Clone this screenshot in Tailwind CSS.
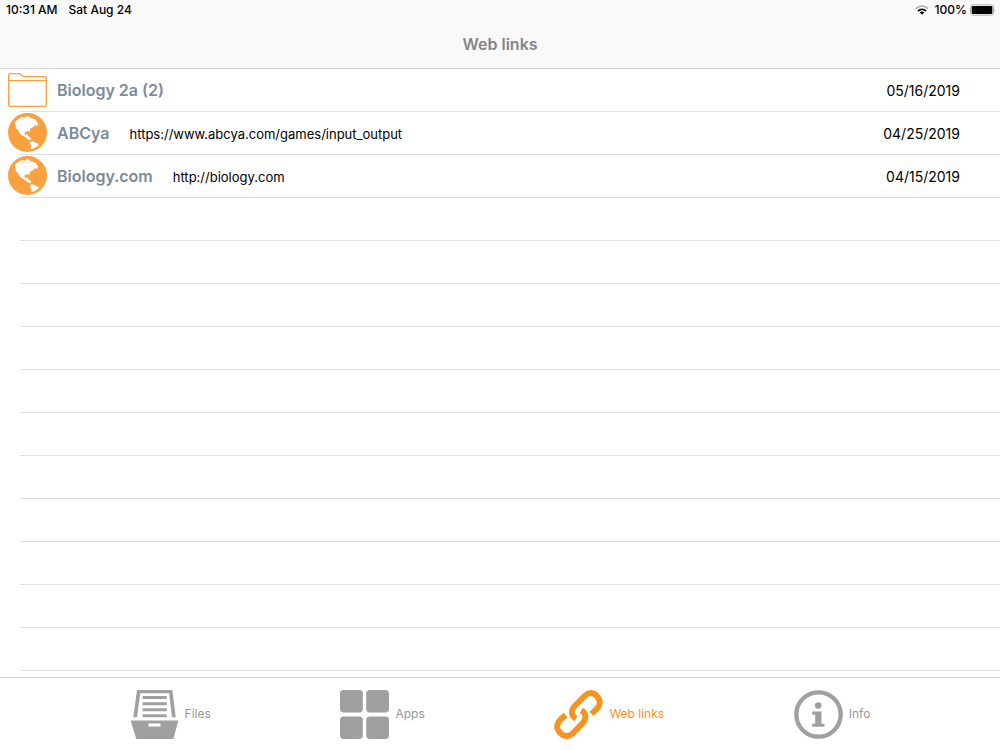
<!DOCTYPE html>
<html lang="en">
<head>
<meta charset="utf-8">
<meta name="viewport" content="width=device-width, initial-scale=1">
<title>Web links</title>
<script src="https://cdn.jsdelivr.net/npm/@tailwindcss/browser@4"></script>
</head>
<body class="flex h-screen flex-col overflow-hidden bg-white font-['Inter',sans-serif] text-black">
<svg class="hidden" aria-hidden="true">
  <symbol id="globe" viewBox="0 0 117 117">
    <circle cx="58.500" cy="58.500" r="58.500" fill="#f9a13e"/>
    <path fill="#fff" d="M20 28 L28 20 L36 15 L44 13 L50 14 L57 9 L66 12 L62 17 L70 14 L77 18 L82 20 L91 32 L86 40 L81 35 L77 41 L71 44 L66 48 L65 57 L61 54 L52 56 L49 62 L53 66 L58 63 L60 69 L66 73 L70 79 L66 82 L59 79 L51 71 L40 66 L34 59 L30 51 L23 45 L23 35 Z"/>
    <path fill="#fff" d="M67 86 L76 85 L83 89 L92 92 L91 98 L83 103 L75 108 L68 108 L70 99 L66 92 Z"/>
    <path fill="none" stroke="#f9a13e" stroke-width="2" d="M42 18 L47 21 M54 16 L52 20"/>
  </symbol>
</svg>

<header class="shrink-0 border-b border-[#d2d2d2] bg-[#f9f9f9]">
  <div class="flex h-5 items-center justify-between pl-1.5 pr-1 text-xs font-medium">
    <div class="flex gap-[11px]"><span>10:31 AM</span><span>Sat Aug 24</span></div>
    <div class="flex items-center">
      <svg class="mr-1.5 h-[10px] w-[14px]" viewBox="0 0 42 30" fill="none" aria-label="Wi-Fi" role="img">
        <path d="M3 11 Q21 -5 39 11" stroke="#aaa" stroke-width="5"/>
        <path d="M9 18 Q21 8 33 18" stroke="#000" stroke-width="5"/>
        <path d="M14 22 Q21 17 28 22 L21 29 Z" fill="#000"/>
      </svg>
      <span class="mr-[3px]">100%</span>
      <svg class="h-[12px] w-[26px]" viewBox="0 0 78 36" aria-label="Battery full" role="img">
        <rect x="1.500" y="2.500" width="69" height="31" rx="8" fill="#fff" stroke="#aaa" stroke-width="3"/>
        <rect x="5" y="6" width="62" height="24" rx="4"/>
        <path d="M74 13 Q78 18 74 23 Z" fill="#999"/>
      </svg>
    </div>
  </div>
  <h1 class="flex h-12 items-center justify-center text-base font-semibold text-[#858585]">Web links</h1>
</header>

<main class="min-h-0 flex-1 overflow-hidden">
  <ul>
    <li class="relative h-[43px] after:absolute after:bottom-0 after:left-5 after:right-0 after:h-px after:bg-[#dfdfdf]">
      <a href="#biology-2a" class="flex h-[41px] items-center pl-2 pr-10">
        <svg class="h-[34px] w-[39px] shrink-0" viewBox="0 0 117 102" fill="none" stroke="#f9a13e" stroke-width="4" stroke-linejoin="round" aria-hidden="true">
          <path d="M2 96 V7 Q2 2 7 2 H31 Q34 2 37 4 L45 10 Q47 11 50 11 H110 Q115 11 115 16 V95 Q115 100 110 100 H7 Q2 100 2 96 Z M2 23 H115"/>
        </svg>
        <div class="ml-2.5 flex flex-1 items-baseline">
          <span class="text-base font-semibold text-[#7b8b9a]">Biology 2a (2)</span>
          <time class="ml-auto text-sm">05/16/2019</time>
        </div>
      </a>
    </li>
    <li class="relative h-[43px] after:absolute after:bottom-0 after:left-5 after:right-0 after:h-px after:bg-[#dfdfdf]">
      <a href="https://www.abcya.com/games/input_output" class="flex h-[41px] items-center pl-2 pr-10">
        <svg class="size-[39px] shrink-0" aria-hidden="true"><use href="#globe"/></svg>
        <div class="ml-2.5 flex flex-1 items-baseline">
          <span class="text-base font-semibold text-[#7b8b9a]">ABCya</span>
          <span class="ml-5 text-[13px]">https://www.abcya.com/games/input_output</span>
          <time class="ml-auto text-sm">04/25/2019</time>
        </div>
      </a>
    </li>
    <li class="relative h-[43px] after:absolute after:bottom-0 after:left-5 after:right-0 after:h-px after:bg-[#dfdfdf]">
      <a href="http://biology.com" class="flex h-[41px] items-center pl-2 pr-10">
        <svg class="size-[39px] shrink-0" aria-hidden="true"><use href="#globe"/></svg>
        <div class="ml-2.5 flex flex-1 items-baseline">
          <span class="text-base font-semibold text-[#7b8b9a]">Biology.com</span>
          <span class="ml-5 text-[13px]">http://biology.com</span>
          <time class="ml-auto text-sm">04/15/2019</time>
        </div>
      </a>
    </li>
  </ul>
  <div class="pl-5" aria-hidden="true">
    <div class="h-[43px] border-b border-[#dfdfdf]"></div>
    <div class="h-[43px] border-b border-[#dfdfdf]"></div>
    <div class="h-[43px] border-b border-[#dfdfdf]"></div>
    <div class="h-[43px] border-b border-[#dfdfdf]"></div>
    <div class="h-[43px] border-b border-[#dfdfdf]"></div>
    <div class="h-[43px] border-b border-[#dfdfdf]"></div>
    <div class="h-[43px] border-b border-[#dfdfdf]"></div>
    <div class="h-[43px] border-b border-[#dfdfdf]"></div>
    <div class="h-[43px] border-b border-[#dfdfdf]"></div>
    <div class="h-[43px] border-b border-[#dfdfdf]"></div>
    <div class="h-[43px] border-b border-[#dfdfdf]"></div>
  </div>
</main>

<nav class="flex h-[73px] shrink-0 items-center justify-evenly border-t border-[#d2d2d2] bg-white text-xs text-[#979797]">
  <a href="#files" class="flex items-center gap-1.5">
    <svg class="size-[49px]" viewBox="0 0 144 148" fill="#a0a0a0" aria-hidden="true">
      <path d="M19 0 H126 L136 82 H125 L116 10 H29 L19 82 H8 Z"/>
      <path d="M36 18 H109 V27 H36 Z M36 37 H109 V46 H36 Z M36 55 H109 V64 H36 Z M36 73 H109 V82 H36 Z"/>
      <path fill-rule="evenodd" d="M0 92 H144 L129 148 H17 Z M54 101 H90 V110 H54 Z"/>
    </svg>
    <span>Files</span>
  </a>
  <a href="#apps" class="flex items-center gap-1.5">
    <svg class="size-[49px]" viewBox="0 0 148 148" fill="#a0a0a0" aria-hidden="true">
      <rect width="69" height="68" rx="11"/><rect x="79" width="69" height="68" rx="11"/>
      <rect y="80" width="69" height="68" rx="11"/><rect x="79" y="80" width="69" height="68" rx="11"/>
    </svg>
    <span>Apps</span>
  </a>
  <a href="#web-links" aria-current="page" class="flex items-center gap-1.5 text-[#f7941f]">
    <svg class="size-[49px]" viewBox="39 58 149 149" fill="none" stroke="currentColor" stroke-width="18" stroke-linejoin="round" aria-hidden="true">
      <path d="M106 145 C91 137 90 120 100 109 L131 77 C142 65 157 64 168 75 C181 88 181 102 170 114 L153 131"/>
      <path d="M122 120 C137 128 138 146 127 158 L97 189 C85 201 70 201 59 190 C46 178 45 163 57 150 L74 134"/>
    </svg>
    <span>Web links</span>
  </a>
  <a href="#info" class="flex items-center gap-1.5">
    <svg class="size-[49px]" viewBox="0 0 148 148" fill="#a0a0a0" aria-hidden="true">
      <circle cx="74" cy="74" r="67" fill="none" stroke="#a0a0a0" stroke-width="13"/>
      <circle cx="73" cy="47" r="10"/>
      <path d="M55 65 H83 V102 H92 V111 H55 V102 H64 V75 H55 Z"/>
    </svg>
    <span>Info</span>
  </a>
</nav>
</body>
</html>
